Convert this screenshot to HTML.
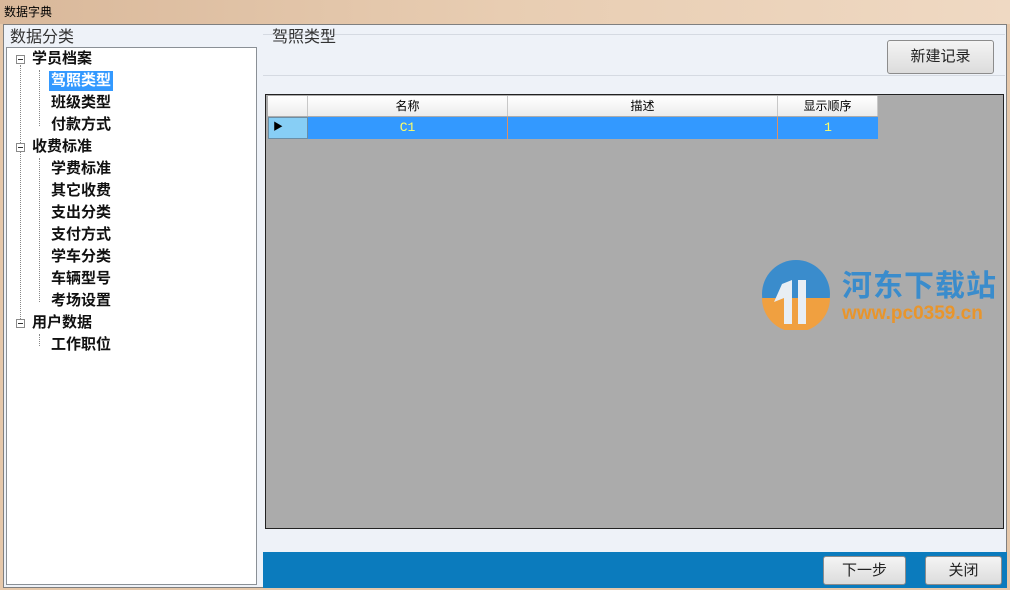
<!DOCTYPE html>
<html><head><meta charset="utf-8"><style>
*{margin:0;padding:0;box-sizing:border-box}
body{width:1010px;height:590px;overflow:hidden;background:#e6c8aa;font-family:"Liberation Sans","Noto Sans CJK SC",sans-serif;position:relative}
.a{position:absolute}
.title{left:0;top:0;width:1010px;height:24px;background:linear-gradient(90deg,#d9b89a,#e8cdb2 50%,#efd9c3);font-size:12px;padding:3px 4px;color:#000}
.win{left:3px;top:24px;width:1004px;height:564px;background:#eef2f8;border:1px solid #7f7f7f}
.tree{left:6px;top:47px;width:251px;height:538px;background:#fff;border:1px solid #8a9096}
.t{font-size:15px;font-weight:bold;color:#111;height:20px;line-height:20px;padding:0 2px}
.exp{width:9px;height:9px;border:1px solid #8a8a8a;background:#fff}
.exp:after{content:"";position:absolute;left:1px;top:3px;width:5px;height:1px;background:#333}
.btn{border:1px solid #8c8c8c;border-radius:3px;background:linear-gradient(#f4f4f4,#dcdcdc);font-size:15px;text-align:center;color:#222}
.hd{top:96px;height:20px;font-size:12px;text-align:center;line-height:20px;background:linear-gradient(#fff,#ececec);border-right:1px solid #c8c8c8}
.cell{top:117px;height:22px;background:#3399ff;color:#ffff66;font-family:"Liberation Mono",monospace;font-size:13px;text-align:center;line-height:22px;border-right:1px solid #e09060}
</style></head><body>
<div class="a title">数据字典</div>
<div class="a win"></div>
<div class="a" style="left:10px;top:23px;font-size:16px;color:#333">数据分类</div>
<div class="a" style="left:263px;top:34px;width:742px;height:42px;border-top:1px solid #d5dae2;border-bottom:1px solid #d5dae2"></div>
<div class="a" style="left:272px;top:23px;font-size:16px;color:#333">驾照类型</div>
<div class="a tree"></div>
<div class="a" style="left:20px;top:65px;height:260px;border-left:1px dotted #888"></div>
<div class="a" style="left:39px;top:70px;height:56px;border-left:1px dotted #888"></div>
<div class="a" style="left:39px;top:158px;height:144px;border-left:1px dotted #888"></div>
<div class="a" style="left:39px;top:334px;height:12px;border-left:1px dotted #888"></div>
<div class="a exp" style="left:16px;top:55px"></div>
<div class="a exp" style="left:16px;top:143px"></div>
<div class="a exp" style="left:16px;top:319px"></div>
<div class="a t" style="left:30px;top:49px">学员档案</div>
<div class="a t" style="left:49px;top:71px;background:#3399ff;color:#fff">驾照类型</div>
<div class="a t" style="left:49px;top:93px">班级类型</div>
<div class="a t" style="left:49px;top:115px">付款方式</div>
<div class="a t" style="left:30px;top:137px">收费标准</div>
<div class="a t" style="left:49px;top:159px">学费标准</div>
<div class="a t" style="left:49px;top:181px">其它收费</div>
<div class="a t" style="left:49px;top:203px">支出分类</div>
<div class="a t" style="left:49px;top:225px">支付方式</div>
<div class="a t" style="left:49px;top:247px">学车分类</div>
<div class="a t" style="left:49px;top:269px">车辆型号</div>
<div class="a t" style="left:49px;top:291px">考场设置</div>
<div class="a t" style="left:30px;top:313px">用户数据</div>
<div class="a t" style="left:49px;top:335px">工作职位</div>
<div class="a btn" style="left:887px;top:40px;width:107px;height:34px;line-height:32px">新建记录</div>
<div class="a" style="left:265px;top:94px;width:739px;height:435px;background:#ababab;border:1px solid #222"></div>
<div class="a hd" style="left:268px;width:40px"></div>
<div class="a hd" style="left:308px;width:200px">名称</div>
<div class="a hd" style="left:508px;width:270px">描述</div>
<div class="a hd" style="left:778px;width:100px">显示顺序</div>
<div class="a" style="left:268px;top:117px;width:40px;height:22px;background:#87cef5;border:1px solid #6a8ea6;font-size:10px;line-height:20px;padding-left:4px">▶</div>
<div class="a cell" style="left:308px;width:200px">C1</div>
<div class="a cell" style="left:508px;width:270px"></div>
<div class="a cell" style="left:778px;width:100px;border-right:none">1</div>
<svg class="a" style="left:760px;top:258px" width="72" height="72" viewBox="0 0 72 72"><circle cx="36" cy="36" r="34" fill="#3a8ccc"/><path d="M2 40 A34 34 0 0 0 70 40 Z" fill="#f0a040"/><path d="M14 44 L22 26 L32 22 L32 66 L24 66 L24 40Z M38 22 L46 22 L46 66 L38 66Z" fill="#e8eef4"/></svg>
<div class="a" style="left:842px;top:261px;font-size:30px;font-weight:bold;color:#3a8ccc;letter-spacing:1px">河东下载站</div>
<div class="a" style="left:842px;top:303px;font-size:19px;font-weight:bold;color:#e8952c">www.pc0359.cn</div>
<div class="a" style="left:263px;top:552px;width:744px;height:36px;background:#0b7bbd"></div>
<div class="a btn" style="left:823px;top:556px;width:83px;height:29px;line-height:27px">下一步</div>
<div class="a btn" style="left:925px;top:556px;width:77px;height:29px;line-height:27px">关闭</div>
</body></html>
